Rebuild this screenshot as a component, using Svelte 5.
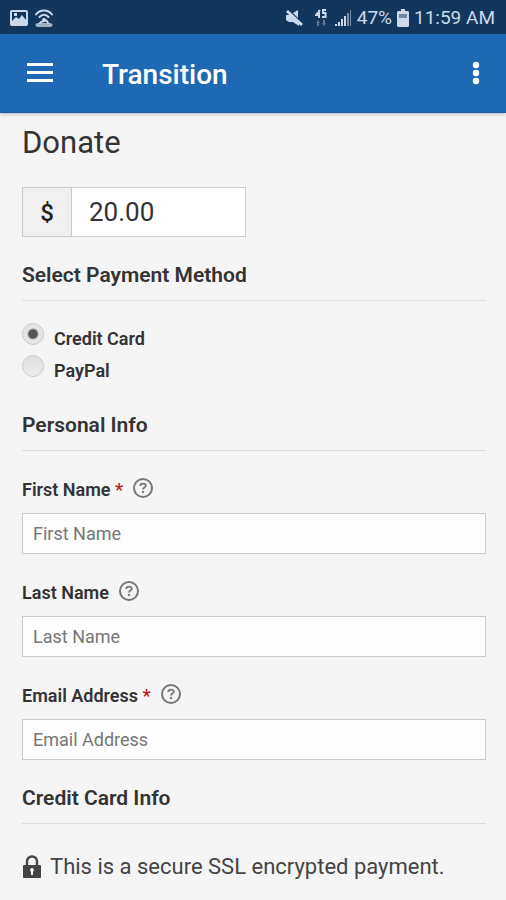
<script lang="ts">
	type Field = {
		id: string;
		label: string;
		type: string;
		required: boolean;
	};

	const fields: Field[] = [
		{ id: 'first-name', label: 'First Name', type: 'text', required: true },
		{ id: 'last-name', label: 'Last Name', type: 'text', required: false },
		{ id: 'email', label: 'Email Address', type: 'email', required: true }
	];

	const methods = [
		{ id: 'card', label: 'Credit Card' },
		{ id: 'paypal', label: 'PayPal' }
	];

	let amount = $state('20.00');
	let method = $state('card');
	let values: Record<string, string> = $state({ 'first-name': '', 'last-name': '', email: '' });
</script>

<div class="status-bar">
	<div class="status-group">
		<svg width="18" height="16" viewBox="0 0 18 16" aria-hidden="true">
			<path
				fill-rule="evenodd"
				d="M2 0h14a2 2 0 0 1 2 2v12a2 2 0 0 1-2 2H2a2 2 0 0 1-2-2V2a2 2 0 0 1 2-2zm0 2v9l4-4 3 2 3-4 4 5V2zm2 1h3v3H4z"
			/>
		</svg>
		<svg width="18" height="18" viewBox="0 0 18 18" aria-hidden="true">
			<g fill="none" stroke="currentColor" stroke-width="2" stroke-linecap="round">
				<path d="M1 5.500C5 .3 13 .3 17 5.500M4.500 8c2.500-3 6.500-3 9 0" />
				<path d="M5 14c1-2 3-1 4-2s3-1 4 2" />
			</g>
			<path d="M2 14h14l2 2-2 2H2l-2-2z" opacity=".75" />
			<circle cx="9" cy="11" r="2" />
		</svg>
	</div>
	<div class="status-group status-right">
		<svg class="mute" width="18" height="18" viewBox="0 0 18 18" aria-hidden="true">
			<path d="M1 6h4l9 8v3l-6-4H4L1 11zM8 4l5-3v8z" />
			<path d="M2 2l15 14" fill="none" stroke="currentColor" stroke-width="3" />
		</svg>
		<svg class="data" width="12" height="18" viewBox="0 0 12 18" aria-hidden="true">
			<path
				d="M5 1L1 6h4M4 1v8M11 1H8v3h2.500v4H7"
				fill="none"
				stroke="currentColor"
				stroke-width="2"
			/>
			<path d="M3 11l2 3H4v3H2v-3H1zM9 17l-2-3h1v-3h2v3h1z" opacity=".4" />
		</svg>
		<svg width="18" height="18" viewBox="0 0 18 18" aria-hidden="true">
			<path d="M1 15h2v2H1zM4 13h2v4H4zM7 10h2v7H7zM10 7h2v10h-2z" />
			<path d="M13 4h2v13h-2zM16 1h1v16h-1z" opacity=".55" />
		</svg>
		<span>47%</span>
		<svg width="12" height="18" viewBox="0 0 12 18" aria-hidden="true">
			<path d="M4 0h4v2h3l1 1v14l-1 1H1l-1-1V3l1-1h3z" />
			<path d="M2 5h8v4H2z" fill="#12375f" opacity=".5" />
		</svg>
		<span>11:59 AM</span>
	</div>
</div>

<header class="app-bar">
	<button type="button" aria-label="Open menu">
		<svg width="28" height="20" viewBox="0 0 28 20" aria-hidden="true">
			<path d="M1 0h26v3H1zM1 8h26v3H1zM1 16h26v3H1z" />
		</svg>
	</button>
	<h1>Transition</h1>
	<button type="button" aria-label="More options">
		<svg width="8" height="24" viewBox="0 0 8 24" aria-hidden="true">
			<circle cx="4" cy="4" r="3.200" />
			<circle cx="4" cy="12" r="3.200" />
			<circle cx="4" cy="20" r="3.200" />
		</svg>
	</button>
</header>

<main>
	<form onsubmit={(event) => event.preventDefault()}>
		<h2 class="page-title">Donate</h2>

		<div class="amount">
			<label for="amount" aria-label="Amount in dollars">$</label>
			<input id="amount" type="text" inputmode="decimal" bind:value={amount} />
		</div>

		<section>
			<h3 id="method-title">Select Payment Method</h3>
			<div class="methods" role="radiogroup" aria-labelledby="method-title">
				{#each methods as item (item.id)}
					<div class="method">
						<input
							type="radio"
							id={item.id}
							name="method"
							value={item.id}
							bind:group={method}
						/>
						<label for={item.id}>{item.label}</label>
					</div>
				{/each}
			</div>
		</section>

		<section>
			<h3>Personal Info</h3>
			{#each fields as field (field.id)}
				<div class="field">
					<div class="field-head">
						<label for={field.id}>
							{field.label}
							{#if field.required}<span class="required">*</span>{/if}
						</label>
						<button type="button" class="help" aria-label="Help">
							<svg width="20" height="20" viewBox="0 0 20 20" aria-hidden="true">
								<g fill="none" stroke="currentColor">
									<circle cx="10" cy="10" r="9" stroke-width="2" />
									<path
										d="M7.300 8C7.300 6.400 8.400 5.600 10 5.600s2.800.8 2.800 2.200c0 1.800-2.800 1.700-2.800 3.700"
										stroke-width="1.800"
									/>
								</g>
								<circle cx="10" cy="14" r="1.200" />
							</svg>
						</button>
					</div>
					<input
						id={field.id}
						type={field.type}
						placeholder={field.label}
						required={field.required}
						bind:value={values[field.id]}
					/>
				</div>
			{/each}
		</section>

		<section>
			<h3>Credit Card Info</h3>
			<p class="secure">
				<svg width="20" height="24" viewBox="0 0 20 24" aria-hidden="true">
					<path d="M5 11V6.500a5 5 0 0 1 10 0V11" fill="none" stroke="currentColor" stroke-width="2.400" />
					<path
						fill-rule="evenodd"
						d="M2 10h16a1 1 0 0 1 1 1v11a1 1 0 0 1-1 1H2a1 1 0 0 1-1-1V11a1 1 0 0 1 1-1zm8 3a2 2 0 0 0-1 3.700V20h2v-3.300A2 2 0 0 0 10 13z"
					/>
				</svg>
				<span>This is a secure SSL encrypted payment.</span>
			</p>
		</section>
	</form>
</main>

<style>
	:global(body) {
		margin: 0;
		background: #f5f5f5;
		color: #333;
		font-family: Roboto, 'Liberation Sans', sans-serif;
	}

	svg {
		display: block;
		flex: none;
		fill: currentColor;
	}

	button {
		display: flex;
		padding: 0;
		border: 0;
		background: none;
		color: inherit;
		cursor: pointer;
	}

	input {
		box-sizing: border-box;
		margin: 0;
		border: 1px solid #ccc;
		border-radius: 0;
		background: #fdfdfd;
		color: #333;
		font: inherit;
	}

	.status-bar {
		display: flex;
		align-items: center;
		justify-content: space-between;
		height: 34px;
		padding: 2px 11px 0 10px;
		box-sizing: border-box;
		background: #12375f;
		color: #cbd9ea;
		font-size: 19px;
		line-height: 32px;
	}

	.status-group {
		display: flex;
		align-items: center;
		gap: 7px;
	}

	.status-right {
		gap: 5px;
	}

	.mute {
		margin-right: 7px;
	}

	.data {
		margin-right: 2px;
	}

	.app-bar {
		display: flex;
		align-items: center;
		height: 79px;
		box-sizing: border-box;
		padding: 0 26px;
		border-bottom: 1px solid #1a5c9f;
		background: #1f69b4;
		box-shadow: 0 1px 4px rgba(0, 0, 0, 0.25);
		color: #fff;
	}

	.app-bar h1 {
		flex: 1;
		margin: 4px 0 0 48px;
		font-size: 28px;
		font-weight: 500;
		line-height: 32px;
	}

	main {
		padding: 12px 20px 19px 22px;
	}

	.page-title {
		margin: 0 0 26px;
		font-size: 31px;
		font-weight: 400;
		line-height: 36px;
	}

	.amount {
		display: flex;
		width: 48%;
		min-width: 224px;
		height: 50px;
		box-sizing: border-box;
		border: 1px solid #ccc;
	}

	.amount label {
		flex: none;
		width: 48px;
		border-right: 1px solid #ccc;
		background: #f0f0f0;
		color: #222;
		font-size: 24px;
		font-weight: 500;
		line-height: 50px;
		text-align: center;
	}

	.amount input {
		flex: 1;
		min-width: 0;
		padding: 0 17px;
		border: 0;
		background: #fff;
		font-size: 26px;
	}

	section {
		margin-top: 24px;
	}

	h3 {
		margin: 0;
		padding-bottom: 11px;
		border-bottom: 1px solid #ddd;
		font-size: 21px;
		font-weight: 600;
		line-height: 28px;
	}

	.methods {
		padding: 17px 0 5px;
	}

	.method {
		display: flex;
		align-items: flex-start;
		gap: 10px;
		height: 32px;
	}

	.method input {
		width: 22px;
		height: 22px;
		margin-top: 5px;
		border-radius: 50%;
		background: linear-gradient(#dedede, #ececec);
		appearance: none;
	}

	.method input:checked {
		background: radial-gradient(circle, #555 4px, #e6e6e6 6px);
	}

	.method label,
	.field-head {
		font-size: 18px;
		font-weight: 600;
		line-height: 24px;
	}

	.method label {
		padding-top: 9px;
	}

	.field {
		margin-top: 27px;
	}

	.field-head {
		display: flex;
		gap: 10px;
		margin-bottom: 11px;
	}

	.required {
		color: #b91d1d;
	}

	.help {
		color: #777;
	}

	.field input {
		display: block;
		width: 100%;
		height: 41px;
		padding: 0 10px;
		font-size: 18px;
	}

	.field input::placeholder {
		color: #777;
		opacity: 1;
	}

	.secure {
		display: flex;
		align-items: center;
		gap: 8px;
		margin: 29px 0 0;
		color: #444;
		font-size: 22px;
		line-height: 28px;
	}
</style>
